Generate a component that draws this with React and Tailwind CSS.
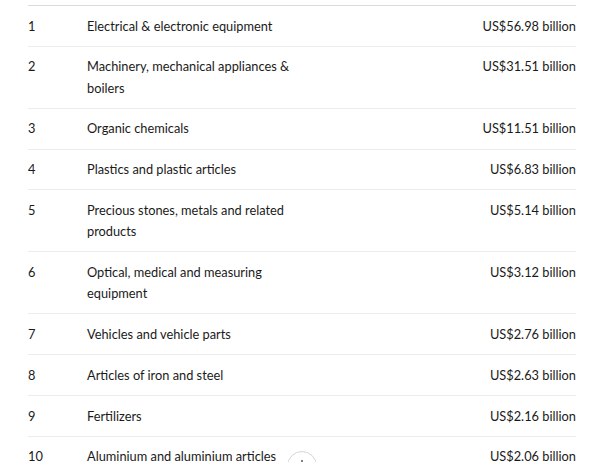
import React from "react";

const rows = [
  ["1", "Electrical & electronic equipment", "US$56.98 billion"],
  ["2", "Machinery, mechanical appliances & boilers", "US$31.51 billion"],
  ["3", "Organic chemicals", "US$11.51 billion"],
  ["4", "Plastics and plastic articles", "US$6.83 billion"],
  ["5", "Precious stones, metals and related products", "US$5.14 billion"],
  ["6", "Optical, medical and measuring equipment", "US$3.12 billion"],
  ["7", "Vehicles and vehicle parts", "US$2.76 billion"],
  ["8", "Articles of iron and steel", "US$2.63 billion"],
  ["9", "Fertilizers", "US$2.16 billion"],
  ["10", "Aluminium and aluminium articles", "US$2.06 billion"],
];

export default function App() {
  return (
    <div
      className="relative w-[608px] h-[462px] overflow-hidden bg-white text-[#1a1a1a]"
      style={{ fontFamily: 'Lato, "Noto Sans", sans-serif' }}
    >
      <div className="pt-[5px] px-[28px] w-[604px]">
        <div className="border-t border-[#dcdcdc]">
          {rows.map(([n, name, v]) => (
            <div
              key={n}
              className="flex items-start border-b border-[#ececec] pt-[9.6px] pb-[9px] text-[12.8px] leading-[21.2px]"
            >
              <div className="w-[59px] shrink-0">{n}</div>
              <div className="w-[212px] shrink-0">{name}</div>
              <div className="flex-1 text-right">{v}</div>
            </div>
          ))}
        </div>
      </div>
      <div className="absolute left-[287px] top-[451px] w-[30px] h-[30px] rounded-full border border-[#d6d6d6] bg-white flex justify-center">
        <div className="mt-[8px] w-[2px] h-[2px] rounded-full bg-[#555]" />
      </div>
    </div>
  );
}
